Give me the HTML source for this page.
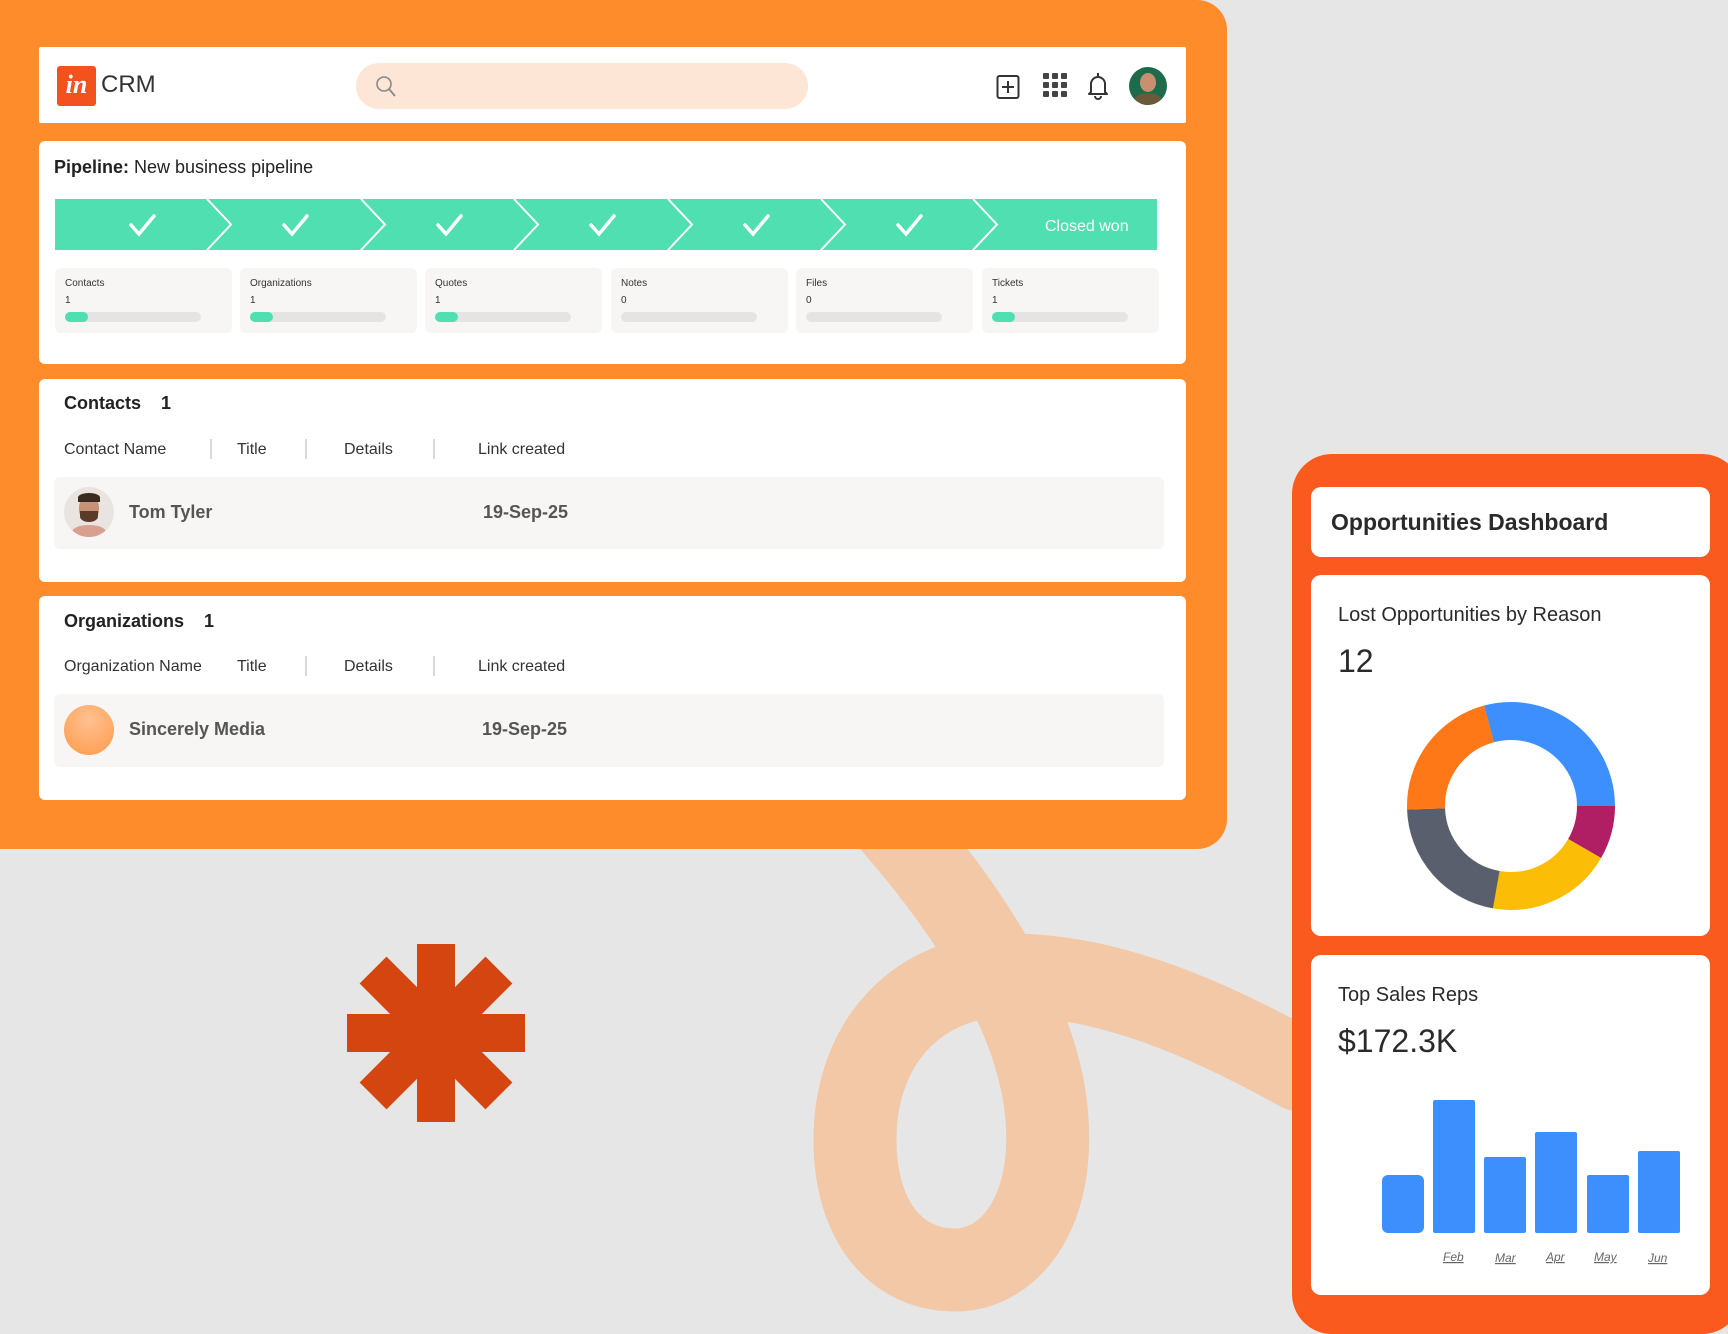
<!DOCTYPE html>
<html><head><meta charset="utf-8"><style>
*{margin:0;padding:0;box-sizing:border-box}
body{width:1728px;height:1326px;background:#e6e6e6;position:relative;overflow:hidden;font-family:"Liberation Sans",sans-serif;color:#222}
.a{position:absolute}
.card{position:absolute;background:#fff;border-radius:6px}
.stat{position:absolute;top:268px;width:177px;height:65px;background:#f7f6f4;border-radius:6px}
.stat .l{position:absolute;left:10px;top:10px;font-size:10px;color:#333}
.stat .v{position:absolute;left:10px;top:27px;font-size:10px;color:#333}
.stat .b{position:absolute;left:10px;top:44px;width:136px;height:10px;border-radius:5px;background:#e4e4e4}
.stat .b i{position:absolute;left:0;top:0;width:23px;height:10px;border-radius:5px;background:#4fdfb0}
.h{position:absolute;font-size:16px;color:#333}
.sep{position:absolute;width:2px;height:20px;background:#d8d8d8}
.row{position:absolute;left:54px;width:1110px;height:72px;background:#f7f6f4;border-radius:6px}
.rc{position:absolute;background:#fff;border-radius:10px}
</style></head><body>
<svg class="a" style="left:0;top:0" width="1728" height="1326"><path d="M 890 820 C 960 900, 1030 1000, 1045 1100 C 1060 1210, 1010 1270, 955 1270 C 895 1270, 855 1220, 855 1140 C 855 1040, 920 975, 1010 975 C 1110 975, 1210 1020, 1300 1070" fill="none" stroke="#f2c8a6" stroke-width="83" stroke-linecap="round"/></svg>

<div class="a" style="left:0;top:0;width:1227px;height:849px;background:#ff8c2b;border-radius:0 30px 30px 0"></div>
<div class="card" style="left:39px;top:47px;width:1147px;height:76px;border-radius:2px"></div>
<div class="a" style="left:57px;top:66px;width:39px;height:40px;background:#f2531e;border-radius:3px;color:#fff;font:italic bold 26px 'Liberation Serif',serif;text-align:center;line-height:38px">in</div>
<div class="a" style="left:101px;top:71px;font-size:24px;color:#333">CRM</div>
<div class="a" style="left:356px;top:63px;width:452px;height:46px;background:#fde6d6;border-radius:23px"></div>
<svg class="a" style="left:374px;top:74px" width="24" height="26"><circle cx="10" cy="10" r="7" fill="none" stroke="#888" stroke-width="1.6"/><path d="M15 15 L21 22" stroke="#888" stroke-width="1.8"/></svg>
<svg class="a" style="left:996px;top:74px" width="24" height="26"><rect x="1.5" y="2" width="21" height="22" rx="2" fill="none" stroke="#333" stroke-width="2"/><path d="M12 7v12M6 13h12" stroke="#333" stroke-width="2"/></svg>
<svg class="a" style="left:1043px;top:73px" width="24" height="24" fill="#444"><rect x="0" y="0" width="6" height="6" rx="1"/><rect x="9" y="0" width="6" height="6" rx="1"/><rect x="18" y="0" width="6" height="6" rx="1"/><rect x="0" y="9" width="6" height="6" rx="1"/><rect x="9" y="9" width="6" height="6" rx="1"/><rect x="18" y="9" width="6" height="6" rx="1"/><rect x="0" y="18" width="6" height="6" rx="1"/><rect x="9" y="18" width="6" height="6" rx="1"/><rect x="18" y="18" width="6" height="6" rx="1"/></svg>
<svg class="a" style="left:1086px;top:71px" width="24" height="30"><path d="M12 2v3M5 21V13a7 7 0 0 1 14 0v8l2 2H3z" fill="none" stroke="#333" stroke-width="2" stroke-linejoin="round"/><path d="M9 25a3 3 0 0 0 6 0" fill="none" stroke="#333" stroke-width="2"/></svg>
<div class="a" style="left:1129px;top:67px;width:38px;height:38px;border-radius:50%;background:#1d6b4b;overflow:hidden"><div class="a" style="left:11px;top:6px;width:16px;height:19px;border-radius:50%;background:#c89070"></div><div class="a" style="left:5px;top:26px;width:28px;height:16px;border-radius:50% 50% 0 0;background:#6b5a3a"></div></div>

<div class="card" style="left:39px;top:141px;width:1147px;height:223px"></div>
<div class="a" style="left:54px;top:157px;font-size:18px;color:#222"><b>Pipeline:</b> New business pipeline</div>
<svg class="a" style="left:55px;top:199px" width="1102" height="51">
<rect width="1102" height="51" fill="#4fdfb0"/>
<g fill="none" stroke="#fff" stroke-width="2">
<polyline points="152,0 176,25.5 152,51"/><polyline points="306,0 330,25.5 306,51"/><polyline points="459,0 483,25.5 459,51"/><polyline points="613,0 637,25.5 613,51"/><polyline points="766,0 790,25.5 766,51"/><polyline points="918,0 942,25.5 918,51"/>
</g>
<g fill="none" stroke="#fff" stroke-width="3.5" stroke-linecap="round">
<path d="M76 26l8 9 15-18"/><path d="M229 26l8 9 15-18"/><path d="M383 26l8 9 15-18"/><path d="M536 26l8 9 15-18"/><path d="M690 26l8 9 15-18"/><path d="M843 26l8 9 15-18"/>
</g>
<text x="990" y="32" fill="#fff" font-family="Liberation Sans" font-size="16">Closed won</text>
</svg>
<div class="stat" style="left:55px"><div class="l">Contacts</div><div class="v">1</div><div class="b"><i></i></div></div>
<div class="stat" style="left:240px"><div class="l">Organizations</div><div class="v">1</div><div class="b"><i></i></div></div>
<div class="stat" style="left:425px"><div class="l">Quotes</div><div class="v">1</div><div class="b"><i></i></div></div>
<div class="stat" style="left:611px"><div class="l">Notes</div><div class="v">0</div><div class="b"></div></div>
<div class="stat" style="left:796px"><div class="l">Files</div><div class="v">0</div><div class="b"></div></div>
<div class="stat" style="left:982px"><div class="l">Tickets</div><div class="v">1</div><div class="b"><i></i></div></div>

<div class="card" style="left:39px;top:379px;width:1147px;height:203px"></div>
<div class="a" style="left:64px;top:393px;font-size:18px;font-weight:bold">Contacts &nbsp;&nbsp;&nbsp;1</div>
<div class="h" style="left:64px;top:441px">Contact Name</div><div class="sep" style="left:210px;top:439px"></div>
<div class="h" style="left:237px;top:441px">Title</div><div class="sep" style="left:305px;top:439px"></div>
<div class="h" style="left:344px;top:441px">Details</div><div class="sep" style="left:433px;top:439px"></div>
<div class="h" style="left:478px;top:441px">Link created</div>
<div class="row" style="top:477px"></div>
<div class="a" style="left:64px;top:487px;width:50px;height:50px;border-radius:50%;background:#e9e4df;overflow:hidden"><div class="a" style="left:15px;top:9px;width:20px;height:25px;border-radius:45%;background:#c79378"></div><div class="a" style="left:14px;top:6px;width:22px;height:9px;border-radius:50% 50% 0 0;background:#3a2a20"></div><div class="a" style="left:16px;top:24px;width:18px;height:11px;border-radius:0 0 50% 50%;background:#5a3b2a"></div><div class="a" style="left:8px;top:38px;width:34px;height:14px;border-radius:50% 50% 0 0;background:#d9a090"></div></div>
<div class="a" style="left:129px;top:502px;font-size:18px;font-weight:bold;color:#555">Tom Tyler</div>
<div class="a" style="left:483px;top:502px;font-size:18px;font-weight:bold;color:#555">19-Sep-25</div>

<div class="card" style="left:39px;top:596px;width:1147px;height:204px"></div>
<div class="a" style="left:64px;top:611px;font-size:18px;font-weight:bold">Organizations &nbsp;&nbsp;&nbsp;1</div>
<div class="h" style="left:64px;top:658px">Organization Name</div>
<div class="h" style="left:237px;top:658px">Title</div><div class="sep" style="left:305px;top:656px"></div>
<div class="h" style="left:344px;top:658px">Details</div><div class="sep" style="left:433px;top:656px"></div>
<div class="h" style="left:478px;top:658px">Link created</div>
<div class="row" style="top:694px;height:73px"></div>
<div class="a" style="left:64px;top:705px;width:50px;height:50px;border-radius:50%;background:radial-gradient(circle at 50% 30%,#ffc090,#ff9a4a)"></div>
<div class="a" style="left:129px;top:719px;font-size:18px;font-weight:bold;color:#555">Sincerely Media</div>
<div class="a" style="left:482px;top:719px;font-size:18px;font-weight:bold;color:#555">19-Sep-25</div>

<svg class="a" style="left:347px;top:944px" width="178" height="178"><g fill="#d4450f"><rect x="70" y="0" width="38" height="178"/><rect x="0" y="70" width="178" height="38"/><rect x="70" y="0" width="38" height="178" transform="rotate(45 89 89)"/><rect x="70" y="0" width="38" height="178" transform="rotate(-45 89 89)"/></g></svg>

<div class="a" style="left:1292px;top:454px;width:450px;height:880px;background:#fa5a1e;border-radius:40px"></div>
<div class="rc" style="left:1311px;top:487px;width:399px;height:70px"></div>
<div class="a" style="left:1331px;top:509px;font-size:23px;font-weight:bold;color:#2a2a2a">Opportunities Dashboard</div>
<div class="rc" style="left:1311px;top:575px;width:399px;height:361px"></div>
<div class="a" style="left:1338px;top:604px;font-size:20px;color:#2a2a2a">Lost Opportunities by Reason</div>
<div class="a" style="left:1338px;top:643px;font-size:32px;color:#2a2a2a">12</div>
<svg class="a" style="left:1401px;top:696px" width="220" height="220"><g transform="translate(110 110)" fill="none" stroke-width="38">
<circle r="85" stroke="#3d8ffe" stroke-dasharray="155.8 600" transform="rotate(-105)"/>
<circle r="85" stroke="#b01f64" stroke-dasharray="44.5 600" transform="rotate(0)"/>
<circle r="85" stroke="#fbbd05" stroke-dasharray="103.9 600" transform="rotate(30)"/>
<circle r="85" stroke="#5a5f6d" stroke-dasharray="115.7 600" transform="rotate(100)"/>
<circle r="85" stroke="#ff7817" stroke-dasharray="114.2 600" transform="rotate(178)"/>
</g></svg>
<div class="rc" style="left:1311px;top:955px;width:399px;height:340px"></div>
<div class="a" style="left:1338px;top:984px;font-size:20px;color:#2a2a2a">Top Sales Reps</div>
<div class="a" style="left:1338px;top:1023px;font-size:32px;color:#2a2a2a">$172.3K</div>
<svg class="a" style="left:1370px;top:1090px" width="320" height="190" font-family="Liberation Sans" font-size="12" font-style="italic" fill="#666">
<g fill="#3d8ffe"><rect x="12" y="85" width="42" height="58" rx="6"/><rect x="63" y="10" width="42" height="133" rx="2"/><rect x="114" y="67" width="42" height="76" rx="2"/><rect x="165" y="42" width="42" height="101" rx="2"/><rect x="217" y="85" width="42" height="58" rx="2"/><rect x="268" y="61" width="42" height="82" rx="2"/></g>
<text x="73" y="171" text-decoration="underline">Feb</text><text x="125" y="172" text-decoration="underline">Mar</text><text x="176" y="171" text-decoration="underline">Apr</text><text x="224" y="171" text-decoration="underline">May</text><text x="278" y="172" text-decoration="underline">Jun</text>
</svg>
</body></html>
